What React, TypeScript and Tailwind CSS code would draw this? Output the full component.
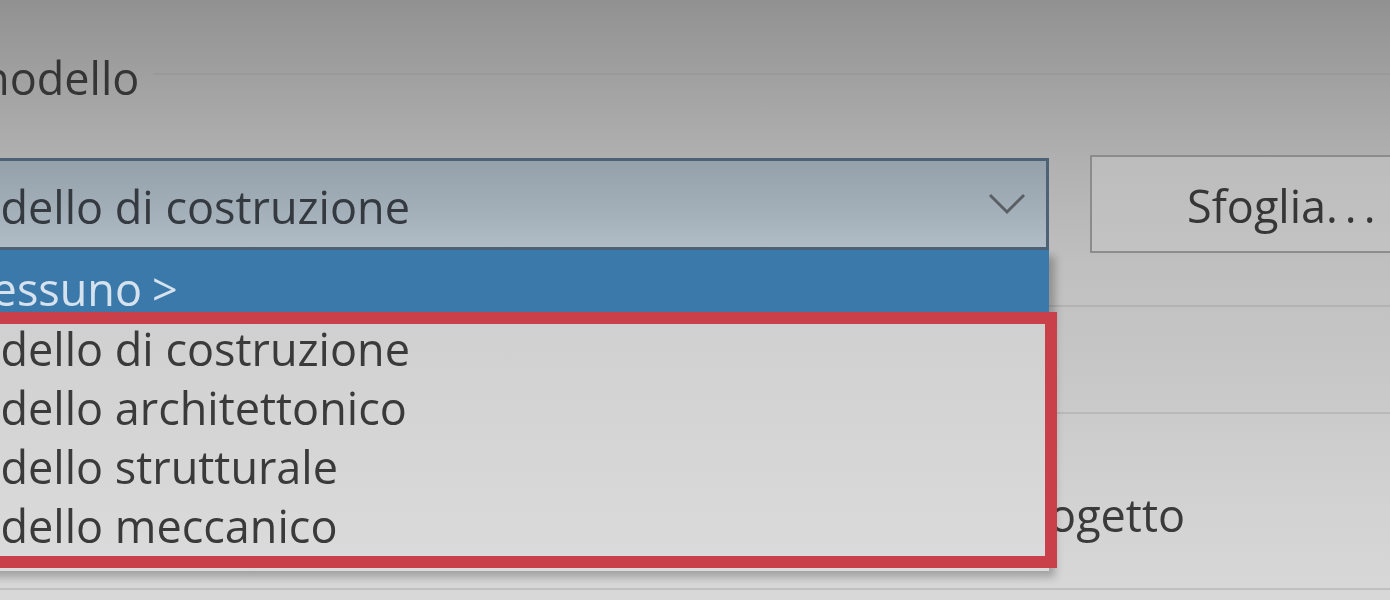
import React from "react";

const items = [
  "Modello di costruzione",
  "Modello architettonico",
  "Modello strutturale",
  "Modello meccanico",
];

function Chevron() {
  return (
    <svg width="40" height="24" viewBox="0 0 40 24" className="shrink-0">
      <polyline points="2,3 19,20 36,3" fill="none" stroke="#5a5f66" strokeWidth="3" />
    </svg>
  );
}

export default function App() {
  return (
    <div className="relative h-[600px] w-full overflow-hidden bg-[linear-gradient(180deg,#919191_0px,#a3a3a3_90px,#b2b2b2_170px,#bfbfbf_260px,#c8c8c8_380px,#d2d2d2_500px,#d8d8d8_600px)] font-['Open_Sans',sans-serif] text-[45px] text-[#353535] blur-[0.6px]">
      <div className="ml-[-80px] flex w-[1600px] flex-col">
        {/* group header */}
        <div className="mt-[48px] flex h-[59px] items-start">
          <span className="ml-[48px] shrink-0 leading-[59px]">modello</span>
          <div className="ml-[14px] mt-[25px] h-[2px] flex-1 bg-[#999999]" />
        </div>

        {/* combo row */}
        <div className="mt-[48px] flex items-center">
          <div className="relative flex h-[92px] w-[1129px] shrink-0 items-center border-[3px] border-[#4d6375] bg-[linear-gradient(180deg,#95a1aa,#a4b0b9_60%,#b1bdc6)] pl-[10px] pr-[18px]">
            <span className="flex-1 pt-[4px] leading-[59px] text-[#343a40]">Modello di costruzione</span>
            <Chevron />

            {/* dropdown list overlay */}
            <div className="absolute left-[-3px] top-[89px] w-[1129px] bg-[linear-gradient(180deg,#cdcdcd,#d4d4d4_50%,#dbdbdb)] shadow-[6px_6px_8px_rgba(0,0,0,0.25)]">
              <div className="h-[66px] bg-[#3c79ab] pl-[12px] pt-[9px] leading-[59px] text-[#d6e3ee]">
                &lt;Nessuno<span className="ml-[10px]">&gt;</span>
              </div>
              <div className="flex flex-col pb-[16px] pt-[3px]">
                {items.map((t) => (
                  <div key={t} className="h-[59px] pl-[13px] leading-[59px] text-[#3a3a3a]">
                    {t}
                  </div>
                ))}
              </div>
            </div>
          </div>
          <div className="ml-[41px] flex h-[98px] w-[400px] shrink-0 items-center border-2 border-[#8c8c8c] bg-[linear-gradient(180deg,#bcbcbc,#c3c3c3)] pl-[95px]">
            <span className="pt-[2px] leading-[59px] text-[#363636]">
              Sfoglia<span className="tracking-[7px]">...</span>
            </span>
          </div>
        </div>

        {/* underlying dialog content */}
        <div className="mt-[52px] h-[2px] bg-[#b3b3b3]" />
        <div className="mt-[105px] h-[2px] bg-[#b9b9b9]" />
        <div className="mt-[71px] flex h-[59px]">
          <span className="w-[1265px] text-right leading-[59px] text-[#3a3a3a]">Usa la cartella del progetto</span>
        </div>
        <div className="mt-[44px] h-[2px] bg-[#c0c0c0]" />
      </div>

      {/* red annotation frame */}
      <div className="absolute left-[-20px] top-[312px] h-[256px] w-[1077px] border-[12px] border-[#c9404a]" />
    </div>
  );
}
